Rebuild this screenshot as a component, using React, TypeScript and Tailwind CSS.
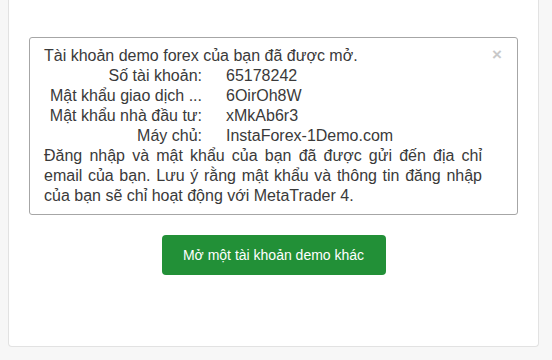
export default function App() {
  const rows = [
    ["Số tài khoản:", "65178242"],
    ["Mật khẩu giao dịch ...", "6OirOh8W"],
    ["Mật khẩu nhà đầu tư:", "xMkAb6r3"],
    ["Máy chủ:", "InstaForex-1Demo.com"],
  ];

  return (
    <div className="h-[360px] w-full bg-[#f7f7f7] pl-2 pr-[13px] font-['Liberation_Sans',Arial,sans-serif]">
      <div className="h-[347px] rounded-b-[4px] border border-t-0 border-[#e2e2e2] bg-white px-5 pt-[37px]">
        {/* Alert box */}
        <div className="relative rounded-[3px] border border-[#a6a6a6] pb-2 pl-[14px] pr-[35px] pt-2 text-[16px] leading-5 text-[#3a3a3a]">
          <button className="absolute right-[15px] top-[7px] text-[17px] font-bold leading-5 text-[#c9c9c9]">
            ×
          </button>
          <div>Tài khoản demo forex của bạn đã được mở.</div>
          <div className="flex flex-col">
            {rows.map(([label, value]) => (
              <div key={label} className="flex">
                <div className="w-[158px] whitespace-nowrap text-right">{label}</div>
                <div className="ml-6">{value}</div>
              </div>
            ))}
          </div>
          <p className="text-justify">
            Đăng nhập và mật khẩu của bạn đã được gửi đến địa chỉ email của bạn. Lưu ý rằng mật khẩu và thông tin đăng
            nhập của bạn sẽ chỉ hoạt động với MetaTrader 4.
          </p>
        </div>

        <div className="mt-5 flex justify-center">
          <button className="h-10 w-[224px] rounded-[4px] bg-[#229037] text-[14px] text-white">
            Mở một tài khoản demo khác
          </button>
        </div>
      </div>
    </div>
  );
}
